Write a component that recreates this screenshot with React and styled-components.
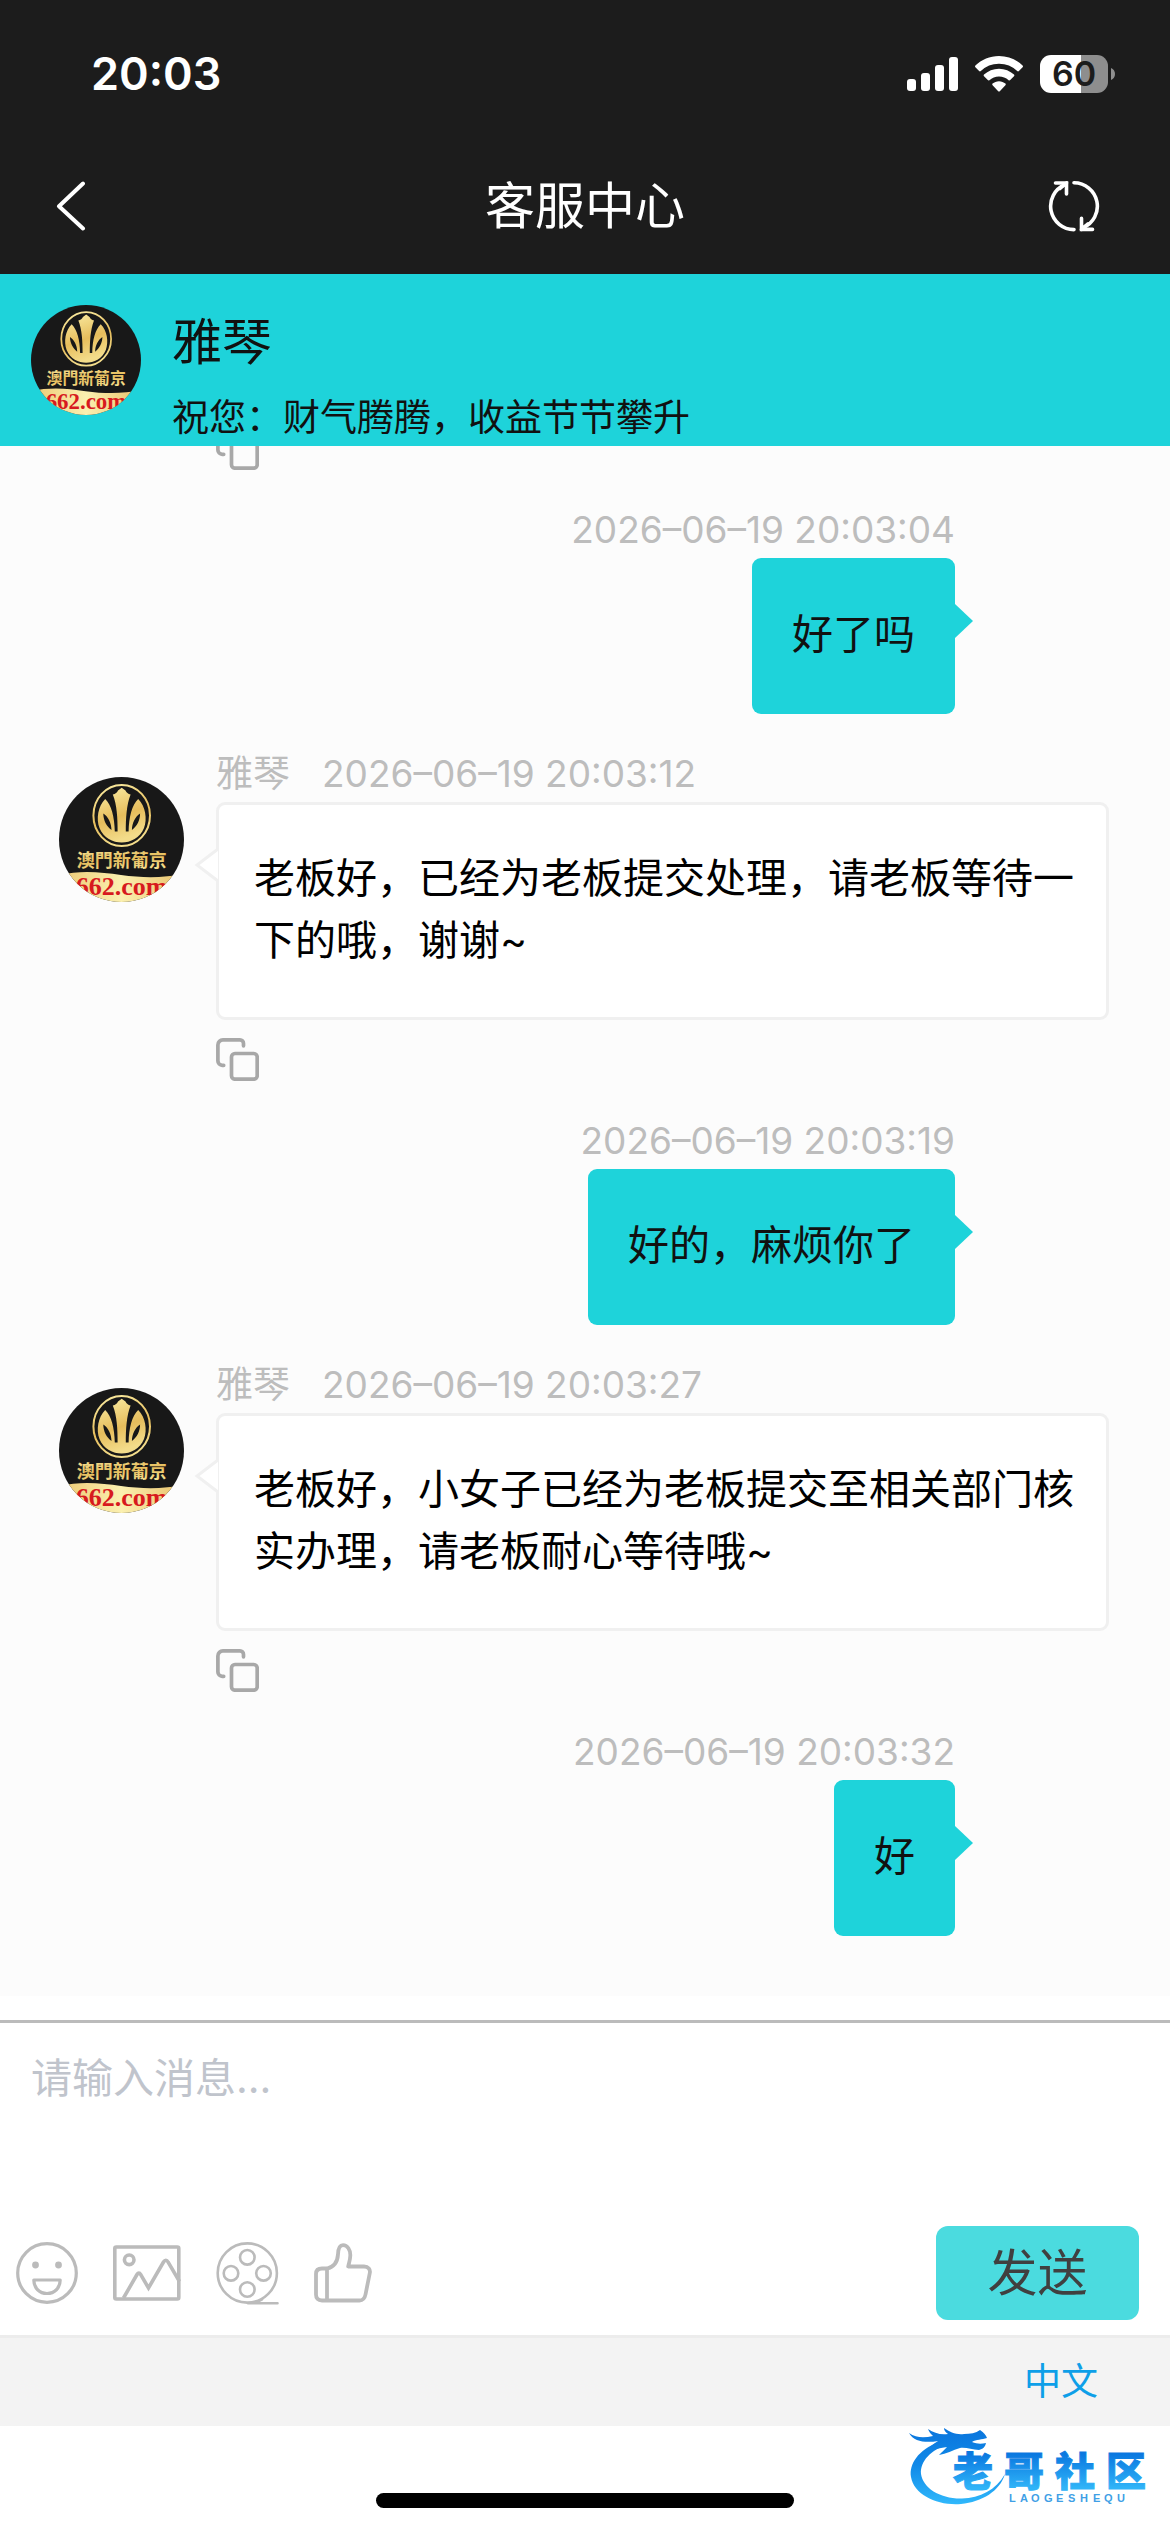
import { useState } from "react";
import styled, { createGlobalStyle } from "styled-components";

const TEAL = "#1ed3da";

const GlobalStyle = createGlobalStyle`
  * {
    box-sizing: border-box;
  }
  body {
    margin: 0;
    background: #fff;
    font-family: Inter, "Noto Sans CJK SC", sans-serif;
    color: #000;
  }
  button {
    border: 0;
    padding: 0;
    background: none;
    font: inherit;
    cursor: pointer;
  }
  svg {
    display: block;
  }
`;

const Page = styled.div`
  display: flex;
  flex-direction: column;
  height: 100vh;
`;

const TopArea = styled.header`
  background: #1c1c1c;
  color: #fff;
`;

const StatusBar = styled.div`
  display: flex;
  align-items: center;
  justify-content: space-between;
  height: 138px;
  padding: 10px 55px 0 91px;
`;

const Clock = styled.span`
  font-size: 45px;
  line-height: 56px;
  font-weight: 600;
`;

const StatusIcons = styled.div`
  display: flex;
  align-items: center;
  gap: 17px;
`;

const Battery = styled.div`
  display: flex;
  align-items: center;
  gap: 3px;
`;

const BatteryLevel = styled.span`
  width: 68px;
  border-radius: 11px;
  background: linear-gradient(to right, #fff 60%, #8e8e8e 60%);
  color: #1c1c1c;
  font-size: 34px;
  line-height: 38px;
  font-weight: 600;
  text-align: center;
`;

const NavBar = styled.nav`
  display: flex;
  align-items: center;
  justify-content: space-between;
  height: 136px;
  padding: 0 70px 0 56px;
`;

const NavButton = styled.button`
  display: flex;
  color: #fff;
`;

const BackButton = styled(NavButton)`
  width: 66px;
`;

const Title = styled.h1`
  margin: 0;
  font-size: 50px;
  line-height: 62px;
  font-weight: 400;
`;

const AgentBar = styled.section`
  display: flex;
  gap: 31px;
  height: 172px;
  padding: 31px 31px 0;
  background: ${TEAL};
`;

const AgentName = styled.h2`
  margin: 0;
  padding-top: 6px;
  font-size: 50px;
  line-height: 62px;
  font-weight: 400;
  color: #111;
`;

const AgentWish = styled.p`
  margin: 0;
  padding-top: 17px;
  font-size: 37px;
  line-height: 56px;
  color: #111;
`;

const MessageList = styled.main`
  display: flex;
  flex-direction: column;
  justify-content: flex-end;
  gap: 32px;
  flex: 1 1 0;
  min-height: 0;
  overflow: hidden;
  padding: 0 61px 60px 59px;
  background: #fcfcfc;
`;

const Row = styled.article`
  display: flex;
  flex-shrink: 0;
  gap: 32px;
  justify-content: ${({ $mine }) => ($mine ? "flex-end" : "flex-start")};
  padding-right: ${({ $mine }) => ($mine ? "154px" : "0")};
`;

const AvatarSlot = styled.div`
  width: 125px;
  flex-shrink: 0;
  padding-top: 31px;
`;

const Body = styled.div`
  display: flex;
  flex-direction: column;
  align-items: ${({ $mine }) => ($mine ? "flex-end" : "stretch")};
  flex: ${({ $mine }) => ($mine ? "none" : "1")};
`;

const Meta = styled.div`
  display: flex;
  gap: 32px;
  font-size: 37px;
  line-height: 56px;
  color: #bdbdbd;
`;

const Bubble = styled.p`
  position: relative;
  margin: 0;
  border-radius: 9px;
  font-size: 41px;
  line-height: 62px;
`;

const MineBubble = styled(Bubble)`
  padding: 45px 40px 49px;
  background: ${TEAL};
  color: #111;

  &::after {
    content: "";
    position: absolute;
    top: 46px;
    left: 100%;
    border: 17px solid transparent;
    border-left: 18px solid ${TEAL};
    border-right: 0;
  }
`;

const TheirBubble = styled(Bubble)`
  padding: 42px 30px 46px 35px;
  border: 3px solid #f0f0f0;
  background: #fff;
`;

const BubbleTail = styled.svg`
  position: absolute;
  top: 42px;
  right: 100%;
`;

const CopyButton = styled.button`
  align-self: flex-start;
  margin-top: 18px;
  color: #a8a8a8;
`;

const EarlierRow = styled(Row)`
  padding-left: 157px;
`;

const Composer = styled.form`
  display: flex;
  flex-direction: column;
  padding: 24px 0 15px;
  background: #fff;
`;

const MessageInput = styled.textarea`
  display: block;
  width: 100%;
  height: 206px;
  padding: 24px 31px;
  border: 0;
  border-top: 3px solid #bbb;
  outline: 0;
  resize: none;
  font: inherit;
  font-size: 41px;
  line-height: 62px;

  &::placeholder {
    color: #c0c4cc;
    opacity: 1;
  }
`;

const Toolbar = styled.div`
  display: flex;
  align-items: center;
  gap: 35px;
  padding: 0 31px 0 16px;
  color: #bbb;
`;

const ToolButton = styled.button`
  color: inherit;
`;

const SendButton = styled.button`
  margin-left: auto;
  width: 203px;
  height: 94px;
  border-radius: 12px;
  background: #4bdbdf;
  color: #404040;
  font-size: 50px;
  line-height: 62px;
`;

const LanguageBar = styled.div`
  display: flex;
  align-items: center;
  justify-content: flex-end;
  height: 91px;
  padding-right: 72px;
  border-top: 3px solid #ececec;
  background: #f3f3f3;
`;

const LanguageLink = styled.a`
  font-size: 37px;
  line-height: 56px;
  color: #0e9fe8;
  text-decoration: none;
`;

const HomeArea = styled.footer`
  position: relative;
  display: flex;
  align-items: flex-end;
  justify-content: center;
  height: 106px;
  padding-bottom: 24px;
  background: #fff;
`;

const HomeIndicator = styled.div`
  width: 418px;
  height: 15px;
  border-radius: 8px;
  background: #000;
`;

const CommunityLogo = styled.svg`
  position: absolute;
  right: 16px;
  bottom: 26px;
`;

const SignalIcon = () => (
  <svg width="51" height="34" viewBox="0 0 51 34" fill="#fff">
    <rect x="0" y="22" width="9" height="12" rx="3" />
    <rect x="14" y="16" width="9" height="18" rx="3" />
    <rect x="28" y="8" width="9" height="26" rx="3" />
    <rect x="42" y="0" width="9" height="34" rx="3" />
  </svg>
);

const WifiIcon = () => (
  <svg width="48" height="36" viewBox="0 0 48 36" fill="#fff">
    <path d="M24 0C33.2 0 41.5 3.6 47.6 9.6c.5.5.5 1.2 0 1.7l-3.7 3.7c-.5.5-1.2.5-1.7 0A26 26 0 0 0 24 7.7 26 26 0 0 0 5.8 15c-.5.5-1.2.5-1.7 0L.4 11.3c-.5-.5-.5-1.2 0-1.7C6.5 3.6 14.8 0 24 0z" />
    <path d="M24 12.7c5.8 0 11 2.2 15 5.9.5.5.5 1.2 0 1.7l-3.8 3.8c-.5.5-1.1.5-1.6.1A14.3 14.3 0 0 0 24 20.5c-3.7 0-7 1.4-9.6 3.7-.5.4-1.1.4-1.6-.1L9 20.3c-.5-.5-.5-1.2 0-1.7 4-3.7 9.2-5.9 15-5.9z" />
    <path d="M24 25.2c2.5 0 4.7.9 6.4 2.4.5.4.5 1.1 0 1.6l-5.6 6c-.5.5-1.1.5-1.6 0l-5.6-6c-.5-.5-.5-1.2 0-1.6 1.7-1.5 3.9-2.4 6.4-2.4z" />
  </svg>
);

const BatteryTip = () => (
  <svg width="4" height="12" viewBox="0 0 4 12">
    <path d="M0 0c2.5 1 4 3.3 4 6s-1.5 5-4 6z" fill="#8e8e8e" />
  </svg>
);

const BackIcon = () => (
  <svg width="30" height="50" viewBox="0 0 30 50" fill="none" stroke="#fff" strokeWidth="4" strokeLinecap="round" strokeLinejoin="round">
    <path d="M27 2.5L3 25.2L27 47.5" />
  </svg>
);

const RefreshIcon = () => (
  <svg width="52" height="52" viewBox="0 0 52 52" fill="none" stroke="#fff" strokeWidth="3.6" strokeLinecap="round">
    <path d="M26 2.8A23.4 23.4 0 0 1 35.2 47.7" />
    <path d="M26 49.6A23.4 23.4 0 0 1 16.8 4.7" />
    <path d="M7.5 3H18.5V14" />
    <path d="M44.5 49.4H33.5V38.4" />
    <path d="M18.5 3L12 8.5M33.5 49.4L40 43.9" />
  </svg>
);

const CopyIcon = () => (
  <svg width="43" height="43" viewBox="0 0 43 43" fill="none" stroke="currentColor" strokeWidth="3.7" strokeLinecap="round">
    <rect x="15.5" y="15.5" width="25.7" height="25.7" rx="3.5" />
    <path d="M27.5 7.8V5.4a3.5 3.5 0 0 0-3.5-3.5H6.9a5 5 0 0 0-5 5V23a4.3 4.3 0 0 0 4.3 4.3h1.5" />
  </svg>
);

const SmileIcon = () => (
  <svg width="62" height="62" viewBox="0 0 62 62" fill="none" stroke="currentColor" strokeWidth="3.2">
    <circle cx="31" cy="31" r="29.3" />
    <circle cx="19.5" cy="23" r="3.4" fill="currentColor" stroke="none" />
    <circle cx="42.5" cy="23" r="3.4" fill="currentColor" stroke="none" />
    <path d="M17.8 38H44.2C44.2 46 38.5 51.5 31 51.5S17.8 46 17.8 38z" strokeLinejoin="round" />
  </svg>
);

const PictureIcon = () => (
  <svg width="68" height="56" viewBox="0 0 68 56" fill="none" stroke="currentColor" strokeWidth="3.6" strokeLinejoin="round">
    <rect x="1.8" y="2" width="64" height="52" rx="1.5" />
    <circle cx="16.2" cy="14.8" r="4.8" />
    <path d="M10.5 53L24 29.5C25.2 27.5 26.6 27.5 27.6 29.5L35.5 43L50.5 17C52 14.6 53.8 14.6 55 17L66.5 36.5" strokeLinejoin="miter" />
  </svg>
);

const FilmIcon = () => (
  <svg width="63" height="63" viewBox="0 0 63 63" fill="none" stroke="currentColor" strokeWidth="2.6" strokeLinecap="round">
    <circle cx="31.3" cy="31" r="29.6" />
    <circle cx="31.3" cy="15.3" r="7.3" />
    <circle cx="31.3" cy="47.5" r="7.3" />
    <circle cx="15" cy="31.3" r="7.3" />
    <circle cx="47.5" cy="31.3" r="7.3" />
    <path d="M32 61.2H61.5M37 61C40 60.5 43 59.5 46 57.5" />
  </svg>
);

const ThumbIcon = () => (
  <svg width="58" height="60" viewBox="0 0 58 60" fill="none" stroke="currentColor" strokeWidth="3.8" strokeLinejoin="round">
    <path d="M8 25.5H13C20 24 23.5 18.5 24 11.5C24.2 6 25 2.2 29 2.2C33.5 2.2 36.5 7 36.3 12.5C36.2 17 35 19.5 34.2 23.5H50C54.5 23.5 56.5 26.5 55.8 30L51.5 51.5C50.7 55.5 49 57.5 45.5 57.5H8C4 57.5 2 55.5 2 51.5V31C2 27.5 4 25.5 8 25.5z" />
    <path d="M13 26V57" />
  </svg>
);

// Round casino badge, all coordinates on a 125 grid.
const Avatar = ({ size, id }) => (
  <svg width={size} height={size} viewBox="0 0 125 125" role="img" aria-label="雅琴">
    <defs>
      <clipPath id={`${id}-clip`}>
        <circle cx="62.5" cy="62.5" r="62.5" />
      </clipPath>
      <linearGradient id={`${id}-gold`} x1="0" y1="0" x2="0.3" y2="1">
        <stop offset="0" stopColor="#fbeea6" />
        <stop offset="0.6" stopColor="#e6bd5c" />
        <stop offset="1" stopColor="#f3dc8a" />
      </linearGradient>
      <linearGradient id={`${id}-band`} x1="0" y1="0" x2="1" y2="0">
        <stop offset="0" stopColor="#ecc873" />
        <stop offset="0.5" stopColor="#fbf0b0" />
        <stop offset="1" stopColor="#e8c069" />
      </linearGradient>
    </defs>
    <g clipPath={`url(#${id}-clip)`}>
      <rect width="125" height="125" fill="#181818" />
      <ellipse cx="62.7" cy="38.5" rx="28.3" ry="30.5" fill="none" stroke={`url(#${id}-gold)`} strokeWidth="2" />
      <path
        d="M46.2 22C39 29 37 42 40.5 51C44.5 61 54 65.5 62.7 65.5S81 61 85 51C88.5 42 86.5 29 79.2 22C73 28 69.8 40 69.6 54.5H66.8C66.8 41 67.5 28 71.6 17.5C69 17 67.5 15.5 66.5 13.5L62.7 10.8L59 13.5C58 15.5 56.5 17 53.8 17.5C58 28 58.6 41 58.6 54.5H55.8C55.6 40 52.4 28 46.2 22z"
        fill={`url(#${id}-gold)`}
      />
      <path d="M44.3 36.5C49 39.5 52.5 46 52.5 53C47.5 49.5 44.3 43 44.3 36.5zM81.1 36.5C76.4 39.5 72.9 46 72.9 53C77.9 49.5 81.1 43 81.1 36.5z" fill="#181818" />
      <text
        x="62.7"
        y="90"
        textAnchor="middle"
        fontFamily="Noto Sans CJK TC, sans-serif"
        fontSize="18"
        fontWeight="700"
        fill={`url(#${id}-gold)`}
      >
        澳門新葡京
      </text>
      <path d="M0 98C22 93 42 95 62 98C84 101 104 101 125 97V125H0z" fill={`url(#${id}-band)`} />
      <text
        x="62.5"
        y="118"
        textAnchor="middle"
        fontFamily="Liberation Serif, serif"
        fontSize="26"
        fontWeight="700"
        fill="#d71a1e"
      >
        662.com
      </text>
    </g>
  </svg>
);

const Community = () => (
  <CommunityLogo width="248" height="84" viewBox="0 0 248 84" role="img" aria-label="老哥社区">
    <defs>
      <linearGradient id="community-blue" gradientUnits="userSpaceOnUse" x1="0" y1="4" x2="0" y2="82">
        <stop offset="0" stopColor="#0a74dc" />
        <stop offset="0.5" stopColor="#1089e8" />
        <stop offset="1" stopColor="#30b8fb" />
      </linearGradient>
      <linearGradient id="community-text" gradientUnits="userSpaceOnUse" x1="0" y1="32" x2="0" y2="66">
        <stop offset="0" stopColor="#0a78e0" />
        <stop offset="1" stopColor="#30b4f8" />
      </linearGradient>
    </defs>
    <g fill="url(#community-blue)">
      <path d="M33 20C12 28 3 42 5 55C8 73 32 84 55 82C76 80 94 69 99 52C90 68 74 76 56 76.5C34 77 17 66 15 52C14 39 25 28 42 22z" />
      <path d="M3 11C10 16 18 16 27 14C25 12 23 10 22 7C28 11 34 13 42 12C39 10 38 8 38 6C44 10 50 13 58 12C64 12 70 11 74 8C78 11 80 13 81 16C76 18 70 17 66 20C71 22 75 22 80 21C79 25 77 27 73 28C66 28 60 25 54 26C47 28 40 32 33 33C36 30 39 27 41 25C33 26 25 28 18 31C22 26 27 22 32 19C20 21 8 20 3 11z" />
    </g>
    <text
      x="47 98 149 200"
      y="64"
      fontFamily="Noto Sans CJK SC, sans-serif"
      fontSize="40"
      fontWeight="900"
      fill="url(#community-text)"
      stroke="url(#community-text)"
      strokeWidth="1"
    >
      老哥社区
    </text>
    <text
      x="103 114 125 138 150 162 174 187 198 211"
      y="80"
      fontFamily="Liberation Sans, sans-serif"
      fontSize="11"
      fontWeight="700"
      fill="#3f9fe6"
    >
      LAOGESHEQU
    </text>
  </CommunityLogo>
);

const CopyMessage = () => (
  <CopyButton type="button" aria-label="复制">
    <CopyIcon />
  </CopyButton>
);

const messages = [
  { id: 1, mine: true, time: "2026–06–19 20:03:04", text: "好了吗" },
  { id: 2, time: "2026–06–19 20:03:12", text: "老板好，已经为老板提交处理，请老板等待一下的哦，谢谢~" },
  { id: 3, mine: true, time: "2026–06–19 20:03:19", text: "好的，麻烦你了" },
  { id: 4, time: "2026–06–19 20:03:27", text: "老板好，小女子已经为老板提交至相关部门核实办理，请老板耐心等待哦~" },
  { id: 5, mine: true, time: "2026–06–19 20:03:32", text: "好" },
];

const Message = ({ id, mine, time, text }) => {
  if (mine) {
    return (
      <Row $mine>
        <Body $mine>
          <Meta>
            <time>{time}</time>
          </Meta>
          <MineBubble>{text}</MineBubble>
        </Body>
      </Row>
    );
  }
  return (
    <Row>
      <AvatarSlot>
        <Avatar size={125} id={`avatar-${id}`} />
      </AvatarSlot>
      <Body>
        <Meta>
          <span>雅琴</span>
          <time>{time}</time>
        </Meta>
        <TheirBubble>
          <BubbleTail width="25" height="36" viewBox="0 0 25 36">
            <path d="M24 2L3 18L24 34" fill="#fff" stroke="#f0f0f0" strokeWidth="3" />
          </BubbleTail>
          {text}
        </TheirBubble>
        <CopyMessage />
      </Body>
    </Row>
  );
};

const App = () => {
  const [draft, setDraft] = useState("");

  return (
    <Page>
      <GlobalStyle />
      <TopArea>
        <StatusBar>
          <Clock>20:03</Clock>
          <StatusIcons>
            <SignalIcon />
            <WifiIcon />
            <Battery>
              <BatteryLevel>60</BatteryLevel>
              <BatteryTip />
            </Battery>
          </StatusIcons>
        </StatusBar>
        <NavBar>
          <BackButton type="button" aria-label="返回">
            <BackIcon />
          </BackButton>
          <Title>客服中心</Title>
          <NavButton type="button" aria-label="刷新">
            <RefreshIcon />
          </NavButton>
        </NavBar>
      </TopArea>
      <AgentBar>
        <Avatar size={110} id="avatar-agent" />
        <div>
          <AgentName>雅琴</AgentName>
          <AgentWish>祝您：财气腾腾，收益节节攀升</AgentWish>
        </div>
      </AgentBar>
      <MessageList>
        <EarlierRow>
          <CopyMessage />
        </EarlierRow>
        {messages.map((m) => (
          <Message key={m.id} {...m} />
        ))}
      </MessageList>
      <Composer onSubmit={(e) => e.preventDefault()}>
        <MessageInput
          aria-label="请输入消息"
          placeholder="请输入消息..."
          value={draft}
          onChange={(e) => setDraft(e.target.value)}
        />
        <Toolbar>
          <ToolButton type="button" aria-label="表情">
            <SmileIcon />
          </ToolButton>
          <ToolButton type="button" aria-label="图片">
            <PictureIcon />
          </ToolButton>
          <ToolButton type="button" aria-label="视频">
            <FilmIcon />
          </ToolButton>
          <ToolButton type="button" aria-label="评价">
            <ThumbIcon />
          </ToolButton>
          <SendButton type="submit">发送</SendButton>
        </Toolbar>
      </Composer>
      <LanguageBar>
        <LanguageLink href="#language">中文</LanguageLink>
      </LanguageBar>
      <HomeArea>
        <HomeIndicator />
        <Community />
      </HomeArea>
    </Page>
  );
};

export default App;
